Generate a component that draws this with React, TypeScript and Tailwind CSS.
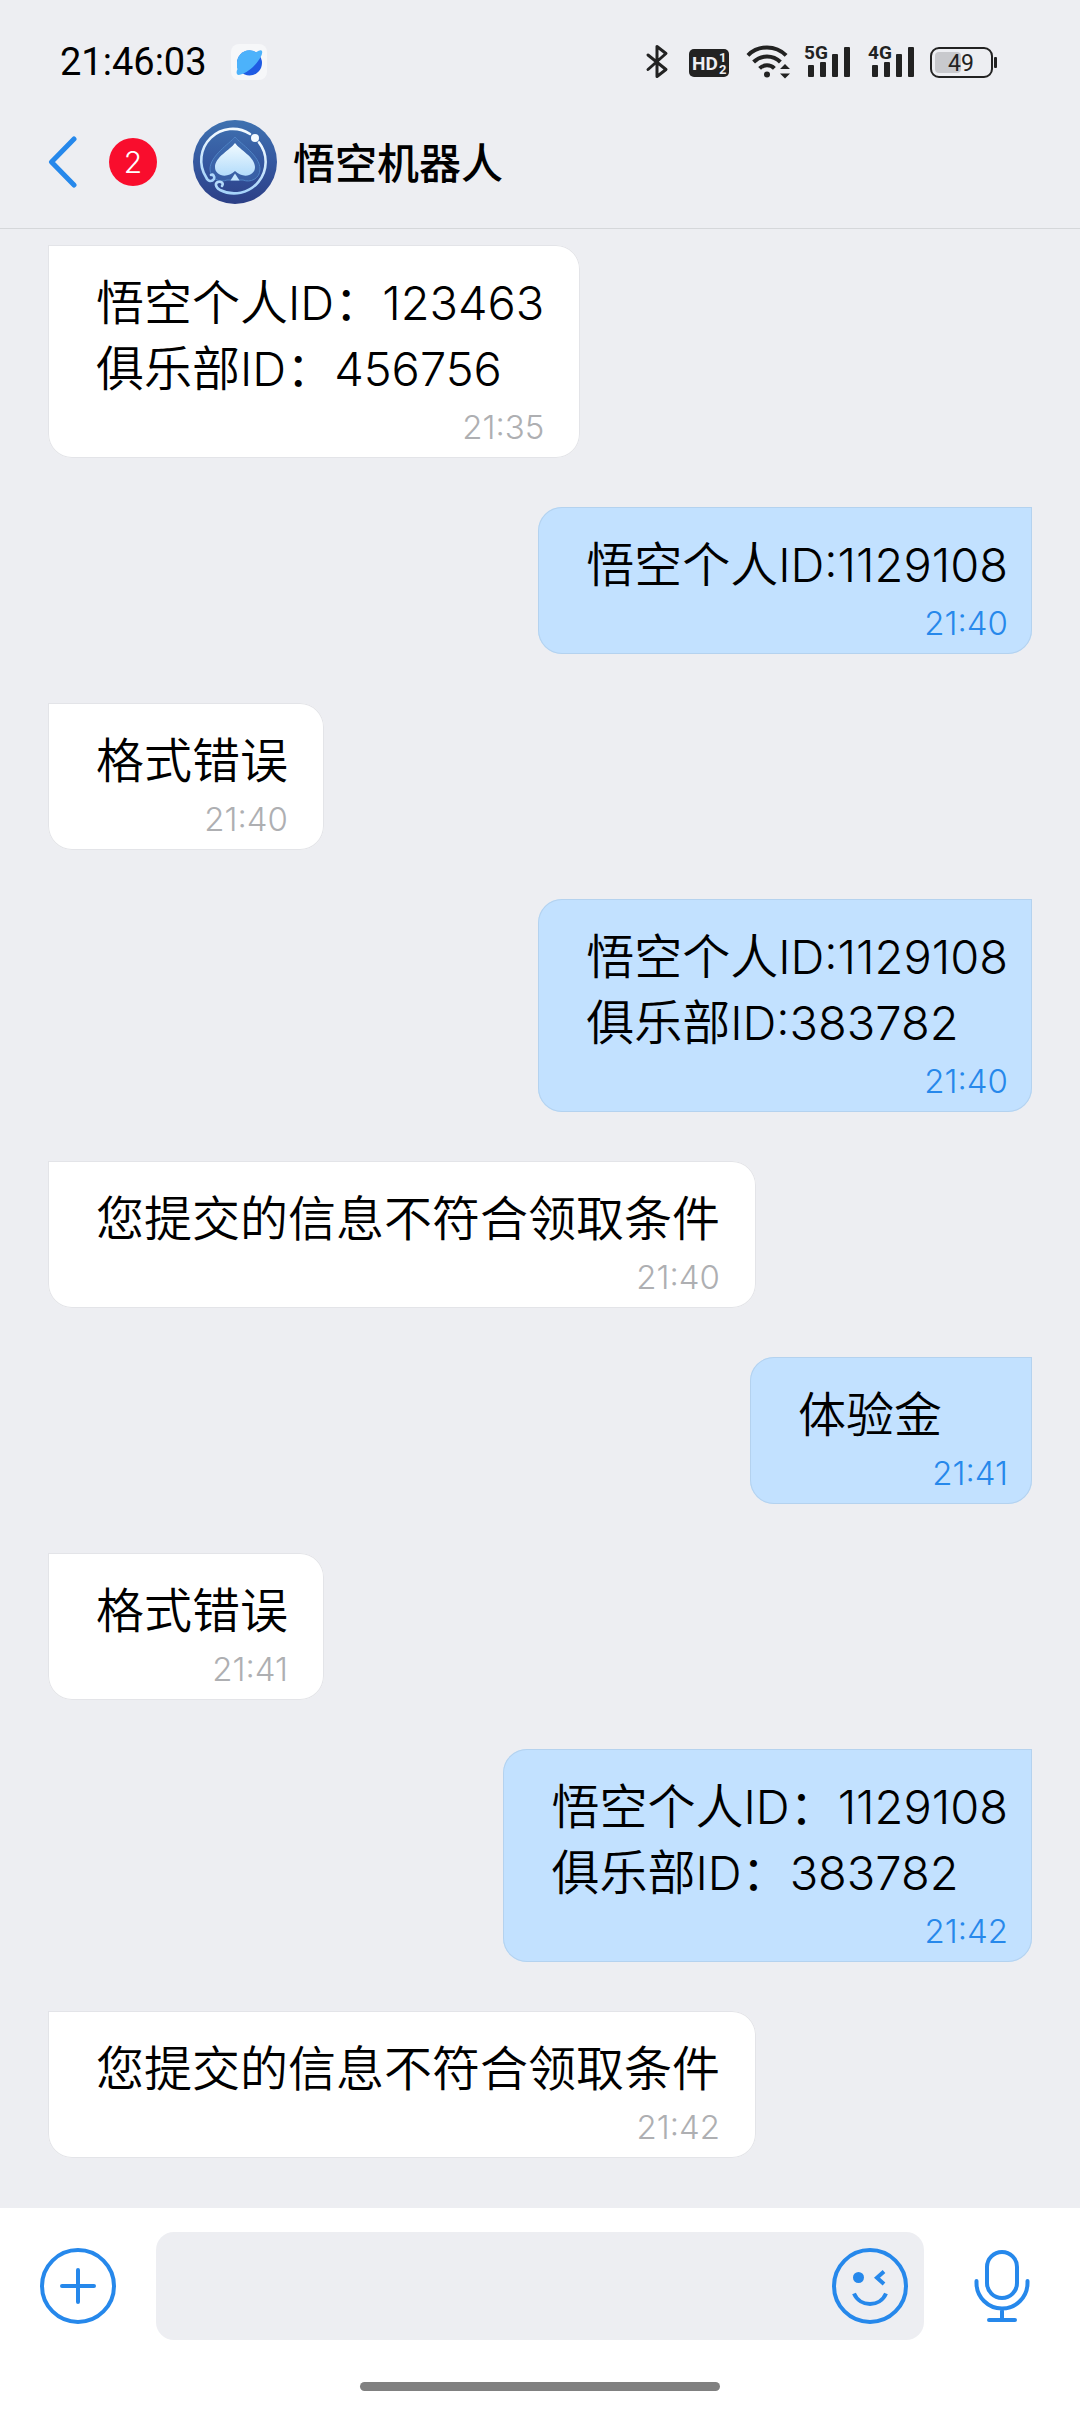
type Message = {
  id: number;
  own: boolean;
  lines: string[];
  time: string;
};

const messages: Message[] = [
  { id: 1, own: false, lines: ["悟空个人ID：123463", "俱乐部ID：456756"], time: "21:35" },
  { id: 2, own: true, lines: ["悟空个人ID:1129108"], time: "21:40" },
  { id: 3, own: false, lines: ["格式错误"], time: "21:40" },
  { id: 4, own: true, lines: ["悟空个人ID:1129108", "俱乐部ID:383782"], time: "21:40" },
  { id: 5, own: false, lines: ["您提交的信息不符合领取条件"], time: "21:40" },
  { id: 6, own: true, lines: ["体验金"], time: "21:41" },
  { id: 7, own: false, lines: ["格式错误"], time: "21:41" },
  { id: 8, own: true, lines: ["悟空个人ID：1129108", "俱乐部ID：383782"], time: "21:42" },
  { id: 9, own: false, lines: ["您提交的信息不符合领取条件"], time: "21:42" },
];

function BluetoothIcon() {
  return (
    <svg className="h-[44px] w-[32px]" viewBox="0 0 32 44" fill="none" stroke="#222" strokeWidth="3" strokeLinecap="round" strokeLinejoin="round">
      <path d="M4 29.5 22 13.5 13 6.5v30l9-7L4 15" />
    </svg>
  );
}

function HdIcon() {
  return (
    <svg className="h-[44px] w-[44px] font-['Roboto',sans-serif] font-bold" viewBox="0 0 44 44" fill="#edeef2">
      <rect x="1" y="9" width="40" height="28" rx="5" fill="#222" />
      <text x="4" y="30" fontSize="19">HD</text>
      <text x="31" y="22" fontSize="13">1</text>
      <text x="31" y="34" fontSize="13">2</text>
    </svg>
  );
}

function WifiIcon() {
  return (
    <svg className="h-[44px] w-[46px]" viewBox="0 0 46 44" fill="none" stroke="#222" strokeWidth="4">
      <path d="M3.9 15.3a27 27 0 0 1 38.2 0" />
      <path d="M9.6 22a19 19 0 0 1 26.8 0" />
      <path d="M15.6 28.4a10.5 10.5 0 0 1 14.8 0" />
      <circle cx="23" cy="34.5" r="3" fill="#222" stroke="none" />
      <path d="m36 29 5-5 5 5zM36 33.500h10l-5 5z" fill="#222" stroke="none" />
    </svg>
  );
}

function SignalIcon({ label }: { label: string }) {
  return (
    <svg className="h-[44px] w-[52px] font-['Roboto',sans-serif] font-bold" viewBox="0 0 52 44" fill="#222">
      <text x="2" y="19" fontSize="19">{label}</text>
      <rect x="6" y="25" width="6" height="12" rx="1" />
      <rect x="18" y="22" width="6" height="15" rx="1" />
      <rect x="30" y="14" width="6" height="23" rx="1" />
      <rect x="42" y="7" width="6" height="30" rx="1" />
    </svg>
  );
}

function BatteryIcon({ level }: { level: number }) {
  return (
    <svg className="h-[44px] w-[68px] font-['Roboto',sans-serif] font-normal" viewBox="0 0 68 44">
      <rect x="1" y="8" width="61" height="29" rx="8" fill="none" stroke="#222" strokeWidth="2" />
      <rect x="5" y="12" width="26" height="21" rx="4" fill="#c8c9cd" />
      <rect x="64" y="17" width="3" height="11" rx="1" fill="#222" />
      <text x="18" y="31" fontSize="23" fill="#222">{level}</text>
    </svg>
  );
}

function BrowserIcon() {
  return (
    <svg className="h-[36px] w-[36px]" viewBox="0 0 36 36">
      <rect width="36" height="36" rx="8" fill="#f6f7f9" />
      <circle cx="18.500" cy="19" r="12.500" fill="#1f5be3" />
      <path d="M6 24V18A12.500 12.500 0 0 1 25 8.200Q30 5 31 7 32 10 28.500 15 22 25 12.500 29.500 7 32 6 30 5 28 6.500 25z" fill="#4cb2fb" />
    </svg>
  );
}

function Avatar() {
  return (
    <svg className="h-[84px] w-[84px]" viewBox="0 0 84 84" fill="none">
      <defs>
        <linearGradient id="disc" x1="0" y1="0" x2="0" y2="1">
          <stop offset="0" stopColor="#3f72b0" />
          <stop offset="0.5" stopColor="#3558a0" />
          <stop offset="1" stopColor="#2c3f86" />
        </linearGradient>
        <linearGradient id="spade" x1="0" y1="0" x2="0" y2="1">
          <stop offset="0" stopColor="#f2fbff" />
          <stop offset="1" stopColor="#b3dcfb" />
        </linearGradient>
        <linearGradient id="ring" x1="0" y1="0" x2="0" y2="1">
          <stop offset="0" stopColor="#f4fbff" />
          <stop offset="1" stopColor="#a5d3fa" />
        </linearGradient>
      </defs>
      <circle cx="42" cy="42" r="42" fill="url(#disc)" />
      <path d="M42 17C36 24 17 36 17 49c0 10 10 14 17 11h16c7 3 17-1 17-11 0-13-19-25-25-32z" fill="#3f6fb4" fillOpacity="0.5" stroke="#4f83c4" strokeWidth="1" />
      <path d="M42 23C37 30 22 37 22 47c0 9 12 12 20 4 8 8 20 5 20-4 0-10-15-17-20-24z" fill="url(#spade)" />
      <path d="M42 53.500 37.500 60.500h9z" fill="#c5e6fd" />
      <g stroke="url(#ring)" strokeWidth="2.600" strokeLinecap="round">
        <path d="M57 14A31.500 31.500 0 0 0 13 57c2 5 6 5 8 2 1-3-1-5-3-4" />
        <path d="M66 22.500A31.500 31.500 0 0 1 27 70c-5-3-5-7-2-8 3-1 6 1 4 4" />
      </g>
      <circle cx="62" cy="18" r="4" fill="#f4fbff" />
    </svg>
  );
}

function ChevronIcon() {
  return (
    <svg className="h-[52px] w-[32px]" viewBox="0 0 32 52" fill="none" stroke="#2688eb" strokeWidth="5" strokeLinecap="round" strokeLinejoin="round">
      <path d="M26 3 3.500 26 26 49" />
    </svg>
  );
}

function PlusIcon() {
  return (
    <svg className="h-[76px] w-[76px]" viewBox="0 0 76 76" fill="none" stroke="#2688eb" strokeWidth="4" strokeLinecap="round">
      <circle cx="38" cy="38" r="36" />
      <path d="M22 38h32M38 22v32" />
    </svg>
  );
}

function WinkIcon() {
  return (
    <svg className="h-[76px] w-[76px]" viewBox="0 0 76 76" fill="none" stroke="#2688eb" strokeWidth="4">
      <circle cx="38" cy="38" r="36" />
      <circle cx="26.500" cy="29.500" r="5.500" fill="#2688eb" stroke="none" />
      <path d="m52 23.500-7 6.200 7 6.200" />
      <path d="M22 45.500c6 14 26 14 32 0" />
    </svg>
  );
}

function MicIcon() {
  return (
    <svg className="h-[76px] w-[76px]" viewBox="0 0 76 76" fill="none" stroke="#2688eb" strokeWidth="4" strokeLinecap="round">
      <rect x="23" y="4" width="30" height="46" rx="15" />
      <path d="M12.500 33v2a25.500 25.500 0 0 0 51 0v-2M38 61v10M25 72h26" />
    </svg>
  );
}

function StatusBar() {
  return (
    <div className="flex h-[44px] items-center justify-between pl-[60px] pr-[82px]">
      <div className="flex items-center gap-6">
        <span className="font-['Roboto',sans-serif] text-[38px] leading-[44px] font-[450]">21:46:03</span>
        <BrowserIcon />
      </div>
      <div className="flex items-center gap-3">
        <BluetoothIcon />
        <HdIcon />
        <WifiIcon />
        <SignalIcon label="5G" />
        <SignalIcon label="4G" />
        <BatteryIcon level={49} />
      </div>
    </div>
  );
}

function ChatHeader() {
  return (
    <div className="flex items-center gap-9 pt-9 pb-6 pl-12">
      <button type="button" aria-label="返回" className="flex items-center gap-[29px]">
        <ChevronIcon />
        <span className="flex h-[48px] w-[48px] items-center justify-center rounded-full bg-[#f90d2d] text-[30px] leading-none text-white">
          2
        </span>
      </button>
      <div className="flex items-center gap-4">
        <Avatar />
        <h1 className="pt-1 text-[42px] leading-[60px] font-medium">悟空机器人</h1>
      </div>
    </div>
  );
}

// Latin letters and digits are set a touch smaller than the Chinese around them.
function MessageLine({ text }: { text: string }) {
  return (
    <p className="h-[66px] text-[48px] leading-[66px] whitespace-nowrap">
      {text.split(/([\w:]+)/).map((part, i) =>
        i % 2 ? (
          <span key={i} className="text-[47px]">
            {part}
          </span>
        ) : (
          part
        ),
      )}
    </p>
  );
}

function Bubble({ message }: { message: Message }) {
  const side = message.own
    ? "min-w-[282px] self-end rounded-tl-3xl bg-[#c2e1ff] pr-6 inset-ring-[#b4d2ef]"
    : "self-start rounded-tr-3xl bg-white pr-9 inset-ring-[#e3e4e8]";
  return (
    <li className={`flex flex-col rounded-b-3xl pt-[25px] pb-[6px] pl-12 inset-ring ${side}`}>
      {message.lines.map((line) => (
        <MessageLine key={line} text={line} />
      ))}
      <time className={`self-end text-[33px] leading-[50px] ${message.own ? "text-[#2688eb]" : "text-[#aeafb2]"}`}>
        {message.time}
      </time>
    </li>
  );
}

function Composer() {
  return (
    <footer className="bg-white pt-6">
      <form className="flex items-center gap-10 px-10">
        <button type="button" aria-label="添加附件">
          <PlusIcon />
        </button>
        <div className="flex h-[108px] min-w-0 flex-1 items-center rounded-[18px] bg-[#edeef2] pr-4 pl-6">
          <input type="text" aria-label="消息" className="h-full min-w-0 flex-1 bg-transparent text-[48px] outline-none" />
          <button type="button" aria-label="表情">
            <WinkIcon />
          </button>
        </div>
        <button type="button" aria-label="语音">
          <MicIcon />
        </button>
      </form>
      <div className="mx-auto mt-[42px] mb-[21px] h-[9px] w-1/3 rounded-full bg-[#808080]" />
    </footer>
  );
}

export default function App() {
  return (
    <div lang="zh-CN" className="flex min-h-screen flex-col bg-[#edeef2] font-['Inter','Noto_Sans_CJK_SC',sans-serif] font-[350] text-black">
      <header className="border-b border-[#d5d7da] pt-10">
        <StatusBar />
        <ChatHeader />
      </header>
      <main className="flex-1">
        <ul className="flex flex-col gap-[49px] px-12 pt-4 pb-12">
          {messages.map((message) => (
            <Bubble key={message.id} message={message} />
          ))}
        </ul>
      </main>
      <Composer />
    </div>
  );
}
